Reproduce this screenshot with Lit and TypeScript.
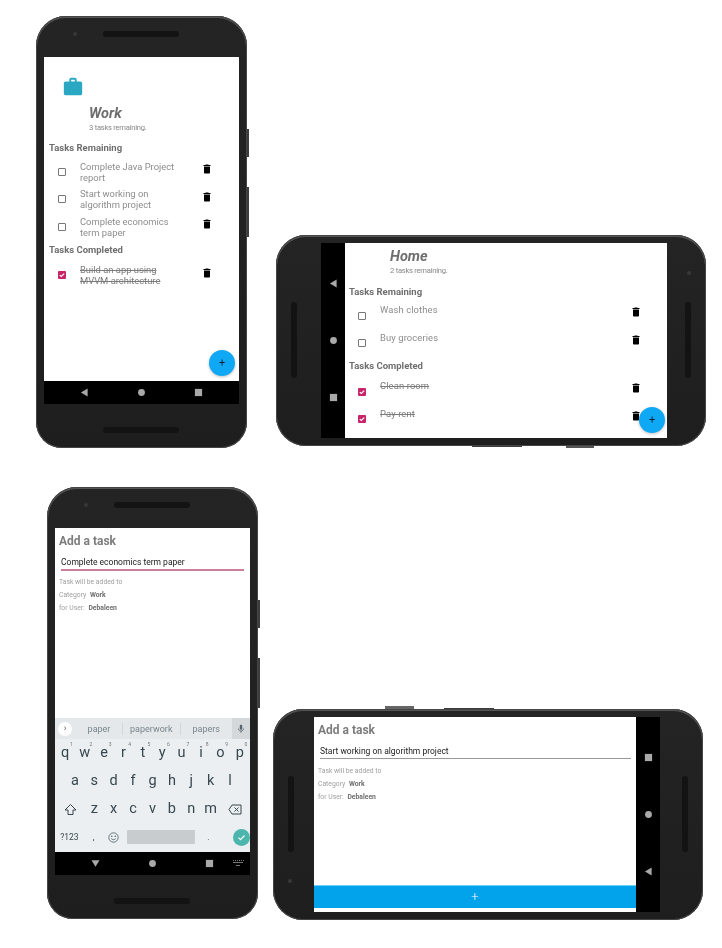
import { css, html, LitElement, svg } from "lit";
import { customElement, property } from "lit/decorators.js";

const trashIcon = svg`<path d="M6 19c0 1.1.9 2 2 2h8c1.1 0 2-.9 2-2V7H6v12zM19 4h-3.5l-1-1h-5l-1 1H5v2h14V4z"/>`;
const workIcon = svg`<path d="M20 6h-4V4c0-1.11-.89-2-2-2h-4c-1.11 0-2 .89-2 2v2H4c-1.11 0-1.99.89-1.99 2L2 19c0 1.11.89 2 2 2h16c1.11 0 2-.89 2-2V8c0-1.11-.89-2-2-2zm-6 0h-4V4h4v2z"/>`;

interface Task {
    lines: string[];
    done?: boolean;
}

@customElement("nav-bar")
export class NavBar extends LitElement {
    @property({ type: Boolean }) vertical = false;
    @property({ type: Boolean }) reversed = false;
    @property({ type: Boolean }) keyboard = false;

    static styles = css`
        :host {
            display: block;
            background: #000;
            flex: none;
        }
        .bar {
            height: 100%;
            display: flex;
            align-items: center;
            justify-content: center;
            gap: 48px;
            position: relative;
        }
        .vertical { flex-direction: column; }
        .reversed { flex-direction: column-reverse; }
        svg { width: 9px; height: 9px; fill: #a9a9a9; display: block; }
        .kb {
            position: absolute;
            left: 177px;
            top: 8px;
            width: 12px;
            height: 7px;
            fill: #777;
        }
    `;

    render() {
        const cls = `bar ${this.vertical ? "vertical" : ""} ${this.reversed ? "reversed" : ""}`;
        const back = this.keyboard
            ? svg`<polygon points="0.500,1.500 9.500,1.500 5,8.500"/>`
            : svg`<polygon points="8.500,0.500 8.500,9.500 1,5"/>`;
        return html`
            <div class=${cls}>
                <svg viewBox="0 0 10 10">${back}</svg>
                <svg viewBox="0 0 10 10"><circle cx="5" cy="5" r="3.8"/></svg>
                <svg viewBox="0 0 10 10"><rect x="1" y="1" width="8" height="8"/></svg>
                ${this.keyboard ? html`<svg class="kb" viewBox="0 0 12 7"><path d="M1 0h1v1H1zM3 0h1v1H3zM5 0h1v1H5zM7 0h1v1H7zM9 0h1v1H9zM11 0h1v1h-1zM1 2h10v1H1zM4 5h4v1H4z"/></svg>` : ""}
            </div>
        `;
    }
}

@customElement("device-frame")
export class DeviceFrame extends LitElement {
    @property({ type: Boolean }) landscape = false;
    @property({ type: Boolean }) flipped = false;

    static styles = css`
        :host { display: block; position: absolute; }
        .body {
            position: relative;
            box-sizing: border-box;
            background: linear-gradient(#242424, #1e1e1e);
            box-shadow: inset 0 0 0 1px #454545, inset 0 1px 0 1px #555;
            display: flex;
        }
        .portrait {
            width: 211px;
            height: 432px;
            border-radius: 30px 30px 26px 26px;
            flex-direction: column;
            padding: 41px 8px 44px;
        }
        .landscape {
            width: 430px;
            height: 211px;
            border-radius: 30px;
            padding: 8px 39px 8px 45px;
        }
        .landscape.flipped { padding: 8px 43px 8px 41px; }
        .speaker {
            position: absolute;
            background: #131313;
            border-radius: 3px;
        }
        .portrait .speaker { left: 67px; width: 76px; height: 6px; }
        .portrait .s1 { top: 15px; }
        .portrait .s2 { bottom: 15px; }
        .landscape .speaker { top: 67px; width: 6px; height: 76px; }
        .landscape .s1 { left: 15px; }
        .landscape .s2 { right: 15px; }
        .camera {
            position: absolute;
            width: 4px;
            height: 4px;
            border-radius: 50%;
            background: #383838;
        }
        .portrait .camera { left: 37px; top: 16px; }
        .landscape .camera { right: 15px; top: 36px; }
        .landscape.flipped .camera { right: auto; left: 15px; top: auto; bottom: 37px; }
        .key { position: absolute; background: #3c3c3c; }
        .portrait .k1 { left: 211px; top: 113px; width: 2px; height: 28px; }
        .portrait .k2 { left: 211px; top: 171px; width: 2px; height: 50px; }
        .landscape .k1 { left: 290px; top: 211px; width: 28px; height: 2px; background: #555; }
        .landscape .k2 { left: 196px; top: 211px; width: 50px; height: 1px; }
        .landscape.flipped .k1 { left: 112px; top: -3px; width: 29px; height: 3px; background: #666; }
        .landscape.flipped .k2 { left: 171px; top: -1px; width: 50px; height: 1px; }
        .screen {
            display: flex;
            flex: 1;
            min-width: 0;
            min-height: 0;
        }
        .portrait .screen { flex-direction: column; }
    `;

    render() {
        const cls = `body ${this.landscape ? "landscape" : "portrait"} ${this.flipped ? "flipped" : ""}`;
        return html`
            <div class=${cls}>
                <span class="key k1"></span>
                <span class="key k2"></span>
                <span class="speaker s1"></span>
                <span class="speaker s2"></span>
                <span class="camera"></span>
                <div class="screen"><slot></slot></div>
            </div>
        `;
    }
}

@customElement("task-screen")
export class TaskScreen extends LitElement {
    @property({ type: Boolean }) landscape = false;
    @property() heading = "";
    @property() remaining = "";
    @property({ type: Array }) tasks: Task[] = [];

    static styles = css`
        :host {
            display: block;
            flex: 1;
            position: relative;
            background: #fff;
            font-family: Roboto, "Liberation Sans", sans-serif;
        }
        .brief { padding: 21px 0 9px 19px; height: 18px; box-sizing: content-box; }
        .brief svg { width: 22px; height: 22px; fill: #2aa7c3; display: block; margin: -2px 0 0 -1px; }
        .head { padding-left: 45px; margin-bottom: 8px; }
        .landscape .head { padding-top: 5px; margin-bottom: 9px; }
        h1 {
            margin: 0;
            font-size: 14.5px;
            line-height: 18px;
            font-style: italic;
            font-weight: 700;
            color: #6e6e6e;
        }
        .sub { font-size: 7.6px; line-height: 10px; letter-spacing: -0.25px; color: #888; }
        h2 {
            margin: 0 0 5px 5px;
            font-size: 9.5px;
            line-height: 14px;
            font-weight: 700;
            color: #6e6e6e;
        }
        h2.second { margin-bottom: 7px; }
        .landscape h2 { margin-left: 4px; }
        .row {
            height: 27.5px;
            display: grid;
            grid-template-columns: 36px 123px 1fr;
            align-items: start;
        }
        .landscape .row { grid-template-columns: 35px 252px 1fr; }
        .box {
            box-sizing: border-box;
            width: 8px;
            height: 8px;
            margin: 7.5px 0 0 14px;
            border: 1px solid #777;
            border-radius: 1px;
        }
        .landscape .box { margin: 7.5px 0 0 13px; }
        .done .box { border: none; background: #c8246a; }
        .box svg { display: block; width: 8px; height: 8px; }
        .txt {
            padding-top: 0.5px;
            font-size: 9.4px;
            line-height: 11px;
            color: #8c8c8c;
        }
        .landscape .txt { padding-top: 0; letter-spacing: 0.12px; }
        .done .txt { text-decoration: line-through; color: #7c7c7c; }
        .trash { width: 12px; height: 12px; fill: #000; margin: 3px 0 0 -2.5px; display: block; }
        .landscape .trash { margin-top: 2px; }
        .fab {
            position: absolute;
            right: 4px;
            bottom: 5px;
            width: 26px;
            height: 26px;
            border-radius: 50%;
            background: #0fa8f5;
            box-shadow: 0 1px 3px rgba(0, 0, 0, 0.25);
            color: #123;
            font-size: 11px;
            line-height: 26px;
            text-align: center;
        }
        .landscape .fab { right: 2px; }
    `;

    private _row(t: Task) {
        return html`
            <div class="row ${t.done ? "done" : ""}">
                <div class="box">
                    ${t.done ? html`<svg viewBox="0 0 9 9"><path d="M2 4.600l1.700 1.600L7 3" fill="none" stroke="#fff" stroke-width="1.300"/></svg>` : ""}
                </div>
                <div class="txt">${t.lines.map(l => html`<div>${l}</div>`)}</div>
                <svg class="trash" viewBox="0 0 24 24">${trashIcon}</svg>
            </div>
        `;
    }

    render() {
        const open = this.tasks.filter(t => !t.done);
        const done = this.tasks.filter(t => t.done);
        return html`
            <div class=${this.landscape ? "landscape" : "portrait"}>
                ${this.landscape ? "" : html`<div class="brief"><svg viewBox="0 0 24 24">${workIcon}</svg></div>`}
                <div class="head">
                    <h1>${this.heading}</h1>
                    <div class="sub">${this.remaining}</div>
                </div>
                <h2>Tasks Remaining</h2>
                <div>${open.map(t => this._row(t))}</div>
                <h2 class="second">Tasks Completed</h2>
                <div>${done.map(t => this._row(t))}</div>
                <div class="fab">+</div>
            </div>
        `;
    }
}

@customElement("add-form")
export class AddForm extends LitElement {
    @property() value = "";
    @property({ type: Boolean }) active = false;

    static styles = css`
        :host {
            display: block;
            flex: 1;
            min-height: 0;
            background: #fff;
            font-family: Roboto, "Liberation Sans", sans-serif;
        }
        .form { padding: 5px 4px 0; }
        h1 {
            margin: 0 0 7px;
            font-size: 12px;
            line-height: 16px;
            font-weight: 700;
            color: #7c7c7c;
        }
        .input {
            margin: 0 1px 6px 2px;
            font-size: 8.5px;
            line-height: 13px;
            color: #222;
            border-bottom: 1px solid #999;
        }
        .active .input {
            border-bottom: 2px solid #cf7f9e;
            margin-right: 2px;
            margin-bottom: 5px;
        }
        .info {
            font-size: 6.8px;
            line-height: 13px;
            color: #a0a0a0;
        }
        b { color: #6e6e6e; margin-left: 2px; font-weight: 700; }
    `;

    render() {
        return html`
            <div class="form ${this.active ? "active" : ""}">
                <h1>Add a task</h1>
                <div class="input">${this.value}</div>
                <div class="info">Task will be added to</div>
                <div class="info">Category <b>Work</b></div>
                <div class="info">for User: <b>Debaleen</b></div>
            </div>
        `;
    }
}

@customElement("soft-keyboard")
export class SoftKeyboard extends LitElement {
    static styles = css`
        :host {
            display: block;
            flex: none;
            height: 134px;
            background: #eceff1;
            font-family: Roboto, "Liberation Sans", sans-serif;
            color: #37474f;
        }
        .strip {
            height: 21px;
            display: grid;
            grid-template-columns: 21px 47px 57.5px 1fr 18px;
            align-items: center;
            background: #e5e8ea;
            font-size: 9px;
            color: #78868d;
            text-align: center;
        }
        .more {
            width: 14px;
            height: 14px;
            margin-left: 3px;
            border-radius: 50%;
            background: #fff;
            font-size: 9px;
            line-height: 13px;
            color: #555;
        }
        .sug { border-right: 1px solid #d3d7da; line-height: 12px; }
        .sug:nth-child(4) { border: none; }
        .mic { height: 21px; background: #d4d8da; display: flex; align-items: center; justify-content: center; }
        .mic svg { width: 10px; height: 10px; fill: #56666e; }
        .keys { display: flex; justify-content: center; height: 28px; align-items: center; font-size: 14.5px; }
        .k { width: 19.4px; text-align: center; position: relative; line-height: 16px; }
        .k sup {
            position: absolute;
            left: 14.5px;
            top: -4px;
            font-size: 5px;
            line-height: 6px;
            color: #777;
        }
        .k svg { display: block; margin: 0 auto; }
        .wide { width: 29px; }
        .tiny { font-size: 8.5px; }
        .space {
            width: 68px;
            height: 14px;
            margin: 0 4px;
            border-radius: 1px;
            background: #c8cccf;
        }
        .go {
            width: 17px;
            height: 17px;
            margin-left: 15px;
            border-radius: 50%;
            background: #4db6ac;
            display: flex;
            align-items: center;
            justify-content: center;
        }
        .go svg { width: 11px; height: 11px; }
    `;

    render() {
        const first = "qwertyuiop".split("");
        return html`
            <div class="strip">
                <div class="more">›</div>
                <div class="sug">paper</div>
                <div class="sug">paperwork</div>
                <div class="sug">papers</div>
                <div class="mic"><svg viewBox="0 0 24 24"><path d="M12 14c1.66 0 3-1.34 3-3V5c0-1.66-1.34-3-3-3S9 3.34 9 5v6c0 1.66 1.34 3 3 3zm5.3-3c0 3-2.54 5.1-5.3 5.1S6.700 14 6.700 11H5c0 3.410 2.720 6.230 6 6.720V21h2v-3.280c3.280-.48 6-3.300 6-6.720h-1.700z"/></svg></div>
            </div>
            <div class="keys">${first.map((c, i) => html`<span class="k"><sup>${(i + 1) % 10}</sup>${c}</span>`)}</div>
            <div class="keys">${"asdfghjkl".split("").map(c => html`<span class="k">${c}</span>`)}</div>
            <div class="keys">
                <span class="k wide"><svg width="13" height="13" viewBox="0 0 13 13"><path d="M6.500 1.500L12 7H9v4.500H4V7H1z" fill="none" stroke="#37474f"/></svg></span>
                ${"zxcvbnm".split("").map(c => html`<span class="k">${c}</span>`)}
                <span class="k wide"><svg width="14" height="11" viewBox="0 0 14 11"><path d="M4 1h9v9H4L1 5.500zM6.500 3.500l4 4M10.500 3.500l-4 4" fill="none" stroke="#37474f"/></svg></span>
            </div>
            <div class="keys">
                <span class="k wide tiny">?123</span>
                <span class="k tiny">,</span>
                <span class="k"><svg width="11" height="11" viewBox="0 0 11 11"><circle cx="5.500" cy="5.500" r="4.700" fill="none" stroke="#455a64" stroke-width=".8"/><circle cx="3.800" cy="4.300" r=".7" fill="#455a64"/><circle cx="7.200" cy="4.300" r=".7" fill="#455a64"/><path d="M3.200 6.500c.8 1.500 3.800 1.500 4.600 0" fill="none" stroke="#455a64" stroke-width=".8"/></svg></span>
                <span class="space"></span>
                <span class="k tiny">.</span>
                <span class="go"><svg viewBox="0 0 11 11"><path d="M2.500 5.700l2 2 4-4.200" fill="none" stroke="#fff" stroke-width="1.100"/></svg></span>
            </div>
        `;
    }
}

@customElement("app-root")
export class AppRoot extends LitElement {
    static styles = css`
        :host {
            display: block;
            position: relative;
            width: 722px;
            height: 948px;
            background: #fff;
            overflow: hidden;
            filter: blur(0.35px);
        }
        .p1 { left: 36px; top: 16px; }
        .p2 { left: 276px; top: 235px; }
        .p3 { left: 47px; top: 487px; }
        .p4 { left: 273px; top: 709px; }
        .nav-h { height: 23px; }
        .nav-v { width: 24px; }
        .column { flex: 1; display: flex; flex-direction: column; min-width: 0; background: #fff; }
        .bar {
            height: 22px;
            margin-bottom: 4px;
            background: #02a3ea;
            border-top: 1px solid #6fd0f5;
            color: #fff;
            font-family: Roboto, "Liberation Sans", sans-serif;
            font-size: 13px;
            font-weight: 300;
            line-height: 22px;
            text-align: center;
        }
    `;

    private _work: Task[] = [
        { lines: ["Complete Java Project", "report"] },
        { lines: ["Start working on", "algorithm project"] },
        { lines: ["Complete economics", "term paper"] },
        { lines: ["Build an app using", "MVVM architecture"], done: true },
    ];

    private _home: Task[] = [
        { lines: ["Wash clothes"] },
        { lines: ["Buy groceries"] },
        { lines: ["Clean room"], done: true },
        { lines: ["Pay rent"], done: true },
    ];

    render() {
        return html`
            <device-frame class="p1">
                <task-screen heading="Work" remaining="3 tasks remaining." .tasks=${this._work}></task-screen>
                <nav-bar class="nav-h"></nav-bar>
            </device-frame>

            <device-frame class="p2" landscape>
                <nav-bar class="nav-v" vertical></nav-bar>
                <task-screen landscape heading="Home" remaining="2 tasks remaining." .tasks=${this._home}></task-screen>
            </device-frame>

            <device-frame class="p3">
                <add-form active value="Complete economics term paper"></add-form>
                <soft-keyboard></soft-keyboard>
                <nav-bar class="nav-h" keyboard></nav-bar>
            </device-frame>

            <device-frame class="p4" landscape flipped>
                <div class="column">
                    <add-form value="Start working on algorithm project"></add-form>
                    <div class="bar">+</div>
                </div>
                <nav-bar class="nav-v" vertical reversed></nav-bar>
            </device-frame>
        `;
    }
}
